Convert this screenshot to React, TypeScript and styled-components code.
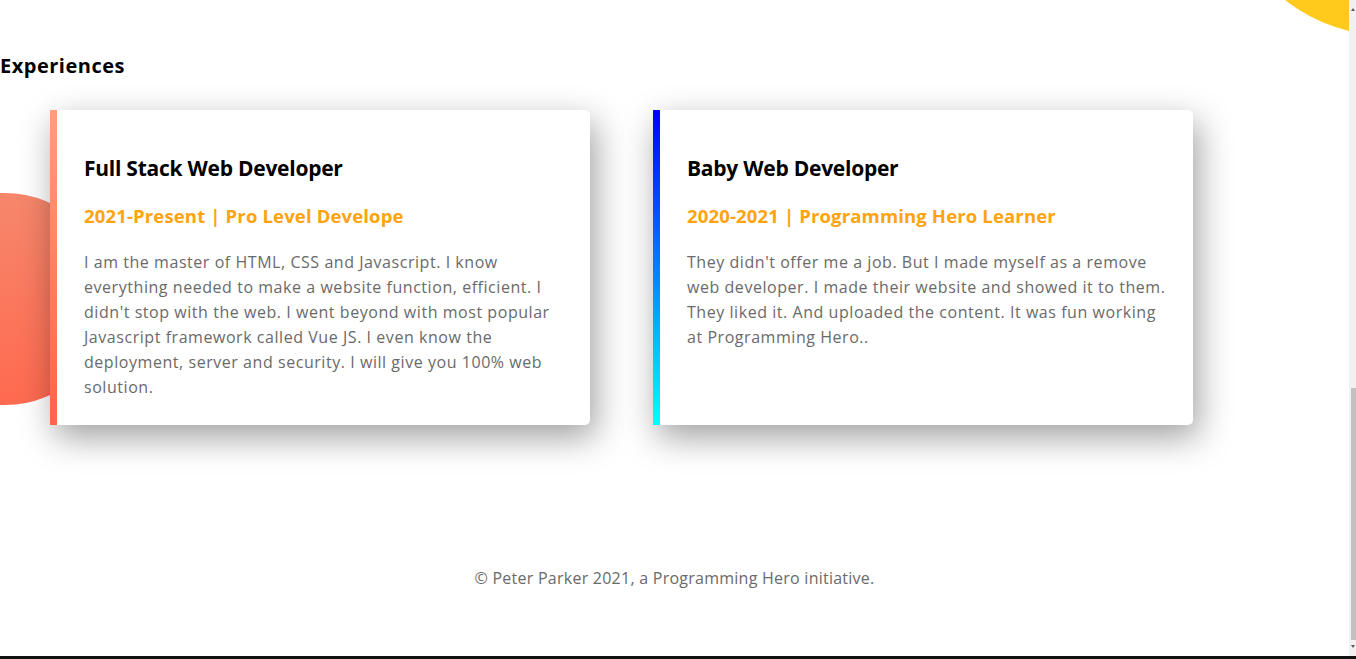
import React from "react";
import styled, { createGlobalStyle } from "styled-components";

const GlobalStyle = createGlobalStyle`
  html, body {
    margin: 0;
    padding: 0;
    background: #ffffff;
    overflow: hidden;
  }
  body {
    font-family: "Open Sans", "Liberation Sans", sans-serif;
    color: #000;
  }
  * { box-sizing: border-box; }
`;

const Page = styled.div`
  position: relative;
  width: calc(100% - 7px);
  height: 656px;
  overflow: hidden;
`;

const Blob = styled.div<{ $kind: "sun" | "coral" }>`
  position: absolute;
  z-index: 0;
  border-radius: 50%;
  ${({ $kind }) =>
    $kind === "sun"
      ? `left: 1225px; top: -285px; width: 320px; height: 320px; background: #ffca1c;`
      : `left: -101px; top: 193px; width: 212px; height: 212px; background: linear-gradient(to bottom, #f6876c, #ff6a50);`}
`;

const Section = styled.section`
  position: relative;
  z-index: 1;
  padding-top: 51px;
`;

const SectionTitle = styled.h2`
  margin: 0;
  font-size: 20px;
  line-height: 30px;
  font-weight: 700;
  letter-spacing: 0.5px;
  color: #000;
`;

const CardRow = styled.div`
  display: flex;
  gap: 63px;
  margin-top: 29px;
  padding-left: 50px;
`;

const Card = styled.article`
  position: relative;
  z-index: 1;
  display: flex;
  width: 540px;
  background: #ffffff;
  border-radius: 0 5px 5px 0;
  box-shadow: 5px 12px 34px rgba(0, 0, 0, 0.38);
`;

const Accent = styled.div<{ $from: string; $to: string }>`
  flex: none;
  width: 7px;
  background: linear-gradient(to bottom, ${({ $from }) => $from}, ${({ $to }) => $to});
`;

const CardBody = styled.div`
  flex: 1;
  padding: 44px 25px 25px 27px;
`;

const CardTitle = styled.h3`
  margin: 0;
  font-size: 21px;
  line-height: 28px;
  font-weight: 700;
  letter-spacing: -0.25px;
  color: #000;
`;

const CardMeta = styled.h4`
  margin: 21px 0 0;
  font-size: 18.5px;
  line-height: 26px;
  font-weight: 700;
  letter-spacing: 0.15px;
  color: #ffa30f;
`;

const CardText = styled.p`
  margin: 21px 0 0;
  font-size: 16px;
  line-height: 25px;
  letter-spacing: 0.55px;
  color: #6a6a6a;
`;

const Footer = styled.footer`
  position: relative;
  z-index: 1;
  margin-top: 141px;
  text-align: center;
  font-size: 16px;
  line-height: 24px;
  letter-spacing: 0.25px;
  color: #6a6a6a;
`;

const ScrollTrack = styled.div`
  position: fixed;
  top: 0;
  right: 0;
  width: 7px;
  height: 656px;
  background: #f1f1f1;
  z-index: 5;
`;

const ScrollThumb = styled.div`
  position: absolute;
  top: 388px;
  right: 0;
  width: 5px;
  height: 252px;
  background: #c1c1c1;
`;

const ScrollArrow = styled.div<{ $dir: "up" | "down" }>`
  position: absolute;
  right: 1px;
  width: 0;
  height: 0;
  border-left: 2.5px solid transparent;
  border-right: 2.5px solid transparent;
  ${({ $dir }) =>
    $dir === "up"
      ? `top: 8px; border-bottom: 3px solid #5a5a5a;`
      : `top: 645px; border-top: 3px solid #5a5a5a;`}
`;

const BottomEdge = styled.div`
  position: fixed;
  left: 0;
  right: 0;
  bottom: 0;
  height: 3px;
  background: #111111;
  z-index: 6;
`;

type Experience = {
  title: string;
  meta: string;
  text: string;
  from: string;
  to: string;
};

const experiences: Experience[] = [
  {
    title: "Full Stack Web Developer",
    meta: "2021-Present | Pro Level Develope",
    text:
      "I am the master of HTML, CSS and Javascript. I know everything needed to make a website function, efficient. I didn't stop with the web. I went beyond with most popular Javascript framework called Vue JS. I even know the deployment, server and security. I will give you 100% web solution.",
    from: "#ff9e7a",
    to: "#ff6347",
  },
  {
    title: "Baby Web Developer",
    meta: "2020-2021 | Programming Hero Learner",
    text:
      "They didn't offer me a job. But I made myself as a remove web developer. I made their website and showed it to them. They liked it. And uploaded the content. It was fun working at Programming Hero..",
    from: "#0000ff",
    to: "#00ffff",
  },
];

export default function App() {
  return (
    <>
      <GlobalStyle />
      <Page>
        <Blob $kind="sun" />
        <Blob $kind="coral" />
        <Section>
          <SectionTitle>Experiences</SectionTitle>
          <CardRow>
            {experiences.map((e) => (
              <Card key={e.title}>
                <Accent $from={e.from} $to={e.to} />
                <CardBody>
                  <CardTitle>{e.title}</CardTitle>
                  <CardMeta>{e.meta}</CardMeta>
                  <CardText>{e.text}</CardText>
                </CardBody>
              </Card>
            ))}
          </CardRow>
        </Section>
        <Footer>© Peter Parker 2021, a Programming Hero initiative.</Footer>
      </Page>
      <ScrollTrack>
        <ScrollArrow $dir="up" />
        <ScrollThumb />
        <ScrollArrow $dir="down" />
      </ScrollTrack>
      <BottomEdge />
    </>
  );
}
